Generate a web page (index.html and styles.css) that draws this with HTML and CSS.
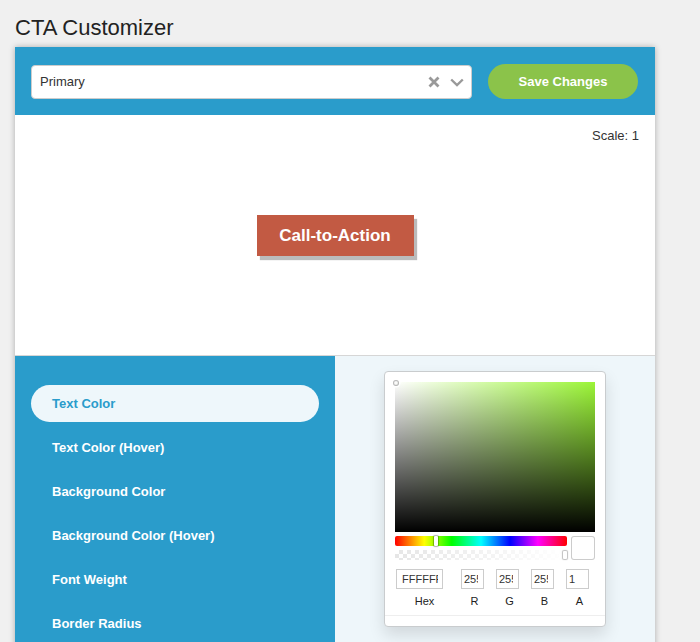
FILE: index.html
```html
<!DOCTYPE html>
<html lang="en">
<head>
<meta charset="utf-8">
<title>CTA Customizer</title>
<link rel="stylesheet" href="styles.css">
</head>
<body>
<h1 class="title">CTA Customizer</h1>
<div class="card">
  <div class="toolbar">
    <div class="select">
      <span class="select-value">Primary</span>
      <span class="select-icons">
        <svg class="icon-clear" width="12" height="12" viewBox="0 0 12 12"><path d="M1.5 1.5 L10.5 10.5 M10.5 1.5 L1.5 10.5" stroke="#999" stroke-width="2.8" stroke-linecap="butt" fill="none"/></svg>
        <svg class="icon-chevron" width="14" height="9" viewBox="0 0 14 9"><polyline points="1.2,1.5 7,7 12.8,1.5" stroke="#999" stroke-width="2.4" fill="none"/></svg>
      </span>
    </div>
    <button class="save">Save Changes</button>
  </div>
  <div class="preview">
    <div class="scale">Scale: 1</div>
    <div class="cta">Call-to-Action</div>
  </div>
  <div class="editor">
    <ul class="menu">
      <li class="menu-item active">Text Color</li>
      <li class="menu-item">Text Color (Hover)</li>
      <li class="menu-item">Background Color</li>
      <li class="menu-item">Background Color (Hover)</li>
      <li class="menu-item">Font Weight</li>
      <li class="menu-item">Border Radius</li>
    </ul>
    <div class="panel">
      <div class="picker">
        <div class="saturation">
          <div class="sat-white"></div>
          <div class="sat-black"></div>
          <div class="sat-pointer"></div>
        </div>
        <div class="controls">
          <div class="sliders">
            <div class="hue"><div class="hue-pointer"></div></div>
            <div class="alpha"><div class="alpha-fill"></div><div class="alpha-pointer"></div></div>
          </div>
          <div class="swatch"></div>
        </div>
        <div class="fields">
          <div class="field field-hex"><input class="field-input" value="FFFFFF" readonly><span class="field-label">Hex</span></div>
          <div class="field"><input class="field-input" value="255" readonly><span class="field-label">R</span></div>
          <div class="field"><input class="field-input" value="255" readonly><span class="field-label">G</span></div>
          <div class="field"><input class="field-input" value="255" readonly><span class="field-label">B</span></div>
          <div class="field"><input class="field-input" value="1" readonly><span class="field-label">A</span></div>
        </div>
        <div class="presets"></div>
      </div>
    </div>
  </div>
</div>
</body>
</html>
```
FILE: styles.css
```css
* { box-sizing: border-box; }
html, body { margin: 0; }
body {
  background: #f0f0f0;
  padding: 15px 0 0 15px;
  font-family: "Liberation Sans", Arial, sans-serif;
  color: #333;
  overflow: hidden;
  height: 642px;
}
.title {
  margin: 0 0 6px;
  font-size: 22px;
  line-height: 26px;
  font-weight: normal;
  color: #222;
}
.card {
  width: 640px;
  background: #fff;
  box-shadow: 0 0 6px rgba(0,0,0,0.28);
}
.toolbar {
  height: 68px;
  background: #2a9ccb;
  display: flex;
  align-items: center;
  padding: 0 17px 0 16px;
  gap: 16px;
}
.select {
  width: 441px;
  height: 34px;
  background: #fff;
  border: 1px solid #ccc;
  border-radius: 4px;
  display: flex;
  align-items: center;
  justify-content: space-between;
  padding: 0 7px 0 8px;
  margin-top: 1px;
}
.select-value { font-size: 13px; color: #333; }
.select-icons { display: flex; align-items: center; gap: 10px; }
.icon-clear { display: block; }
.icon-chevron { display: block; margin-top: 1px; }
.save {
  width: 150px;
  height: 35px;
  border: none;
  border-radius: 18px;
  background: #8bc34a;
  color: #fff;
  font-family: "Liberation Sans", Arial, sans-serif;
  font-weight: bold;
  font-size: 13px;
  padding: 0;
}
.preview {
  height: 241px;
  display: grid;
  border-bottom: 1px solid #d6d6d6;
}
.scale {
  grid-area: 1 / 1;
  justify-self: end;
  align-self: start;
  margin: 13px 16px 0 0;
  font-size: 13px;
  line-height: 16px;
  color: #333;
}
.cta {
  grid-area: 1 / 1;
  place-self: center;
  width: 157px;
  height: 41px;
  line-height: 41px;
  text-align: center;
  background: #c25a43;
  color: #fff;
  font-weight: bold;
  font-size: 17px;
  box-shadow: 3px 4px 1px #bbb;
}
.editor {
  display: grid;
  grid-template-columns: 320px 320px;
  min-height: 330px;
}
.menu {
  list-style: none;
  margin: 0;
  padding: 29px 16px 30px;
  background: #2a9ccb;
}
.menu-item {
  height: 37px;
  line-height: 38px;
  margin-bottom: 7px;
  padding-left: 21px;
  border-radius: 19px;
  font-size: 13px;
  font-weight: bold;
  color: #fff;
}
.menu-item.active {
  background: #eef7fb;
  color: #2a9ccb;
}
.panel {
  background: #eef6fa;
  padding: 15px 0 0 49px;
}
.picker {
  width: 222px;
  background: #fff;
  border: 1px solid #c9ccce;
  border-radius: 4px;
  padding: 10px 10px 0;
  box-shadow: 0 8px 16px rgba(0,0,0,0.12);
}
.saturation {
  position: relative;
  width: 200px;
  height: 150px;
  background: #9bf537;
}
.sat-white {
  position: absolute; inset: 0;
  background: linear-gradient(to right, #fff, rgba(255,255,255,0));
}
.sat-black {
  position: absolute; inset: 0;
  background: linear-gradient(to top, #000, rgba(0,0,0,0));
}
.sat-pointer {
  position: absolute;
  left: -2px; top: -2px;
  width: 6px; height: 6px;
  border-radius: 50%;
  box-shadow: 0 0 0 1.5px #fff, inset 0 0 1px 1px rgba(0,0,0,0.3);
}
.controls {
  display: flex;
  gap: 4px;
  margin-top: 4px;
}
.sliders {
  flex: 1;
  display: flex;
  flex-direction: column;
  gap: 4px;
}
.hue {
  position: relative;
  height: 10px;
  border-radius: 2px;
  background: linear-gradient(to right, #f00 0%, #ff0 17%, #0f0 33%, #0ff 50%, #00f 67%, #f0f 83%, #f00 100%);
}
.hue-pointer {
  position: absolute;
  left: 39px; top: 0;
  width: 4px; height: 10px;
  background: #fff;
  border-radius: 1px;
  box-shadow: 0 0 1px 1px rgba(0,0,0,0.3);
}
.alpha {
  position: relative;
  height: 10px;
  background-color: #fff;
  background-image:
    linear-gradient(45deg, #e6e6e6 25%, transparent 25%, transparent 75%, #e6e6e6 75%),
    linear-gradient(45deg, #e6e6e6 25%, transparent 25%, transparent 75%, #e6e6e6 75%);
  background-size: 8px 8px;
  background-position: 0 0, 4px 4px;
}
.alpha-fill {
  position: absolute; inset: 0;
  background: linear-gradient(to right, rgba(255,255,255,0), #fff);
}
.alpha-pointer {
  position: absolute;
  right: 0; top: 1px;
  width: 4px; height: 8px;
  background: #fff;
  border-radius: 1px;
  box-shadow: 0 0 1px 1px rgba(0,0,0,0.25);
}
.swatch {
  width: 24px;
  height: 24px;
  border-radius: 3px;
  background: #fff;
  box-shadow: inset 0 0 0 1px rgba(0,0,0,0.2);
}
.fields {
  display: flex;
  margin-top: 9px;
}
.field {
  width: 35px;
  padding-left: 6px;
  display: flex;
  flex-direction: column;
}
.field-hex {
  width: 60px;
  padding-left: 1px;
}
.field-input {
  height: 20px;
  border: none;
  box-shadow: inset 0 0 0 1px #ccc;
  margin: 0;
  font-family: "Liberation Sans", Arial, sans-serif;
  font-size: 11px;
  color: #333;
  background: #fff;
  outline: none;
}
.field .field-input { width: 23px; padding: 0 6px 0 3px; }
.field-hex .field-input { width: 47px; padding: 0 5px 0 6px; }
.field-label {
  display: block;
  padding-top: 6px;
  font-size: 11px;
  line-height: 13px;
  text-align: center;
  color: #222;
}
.field .field-label { width: 27px; }
.field-hex .field-label { width: 57px; }
.presets {
  margin: 7px -10px 0;
  height: 11px;
  border-top: 1px solid #eee;
}
```
